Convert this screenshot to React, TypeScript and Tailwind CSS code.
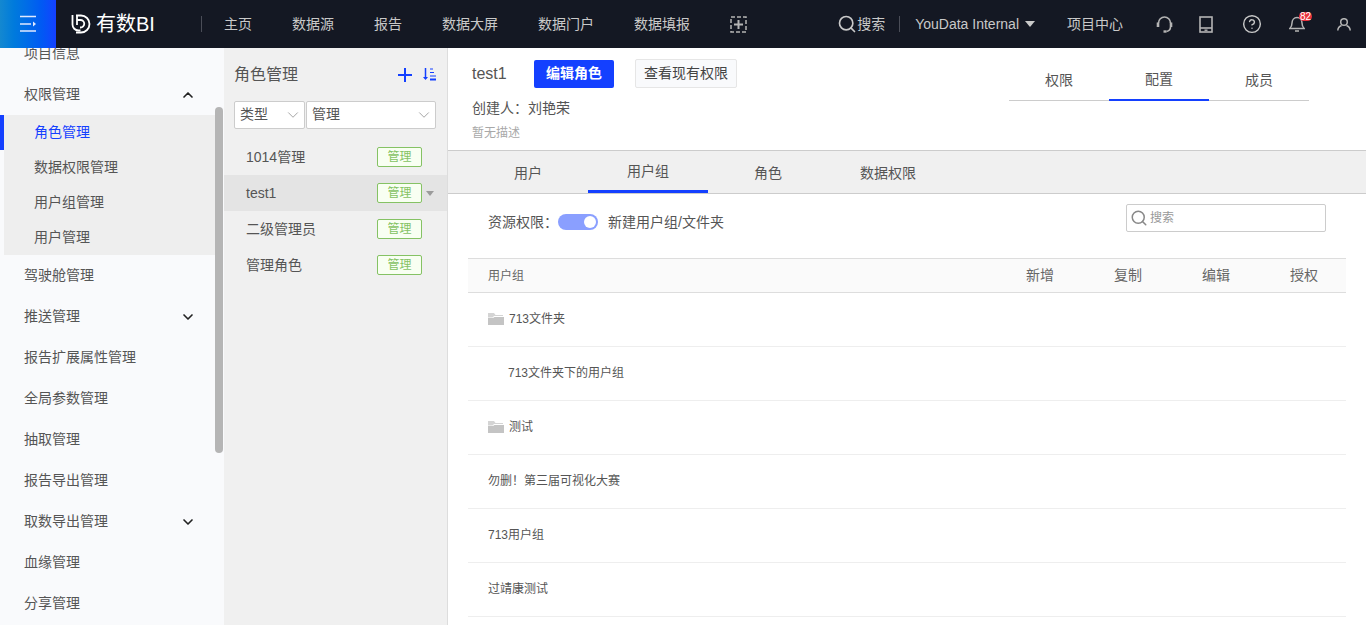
import { ChevronDown, ChevronUp, CircleHelp, Search } from "lucide-react";

const FONT = "font-['Liberation_Sans','Noto_Sans_CJK_SC',sans-serif]";

const NAV = ["主页", "数据源", "报告", "数据大屏", "数据门户", "数据填报"];
const SUB_MENU = ["角色管理", "数据权限管理", "用户组管理", "用户管理"];
const MENU_AFTER: [string, boolean][] = [
  ["驾驶舱管理", false],
  ["推送管理", true],
  ["报告扩展属性管理", false],
  ["全局参数管理", false],
  ["抽取管理", false],
  ["报告导出管理", false],
  ["取数导出管理", true],
  ["血缘管理", false],
  ["分享管理", false],
];
const ROLES = ["1014管理", "test1", "二级管理员", "管理角色"];
const ROWS: { name: string; folder?: boolean; indent?: boolean }[] = [
  { name: "713文件夹", folder: true },
  { name: "713文件夹下的用户组", indent: true },
  { name: "测试", folder: true },
  { name: "勿删！第三届可视化大赛" },
  { name: "713用户组" },
  { name: "过靖康测试" },
];

const FolderIcon = () => (
  <svg width="16" height="12" viewBox="0 0 16 12" className="mr-[5px]">
    <path d="M0 0h6l1.500 2H15v1H6L4.500 4.500H0z" fill="#d4d4d4" />
    <path d="M0 5h5l1.500-1H16v8H0z" fill="#c4c4c4" />
  </svg>
);

const Header = () => (
  <header className="flex h-12 shrink-0 items-center bg-[#141823] text-[14px] text-[#c9c9c9]">
    <div className="flex h-12 w-14 items-center justify-center bg-gradient-to-r from-[#1488d0] to-[#1440ff]">
      <svg width="16" height="18" viewBox="0 0 16 18" fill="none" stroke="#dfe9ff" strokeWidth="1.600">
        <path d="M0 1.500h16M0 9h11M0 16h16" />
        <path d="M13 6.500l3 2.500-3 2.500z" fill="#dfe9ff" stroke="none" />
      </svg>
    </div>
    <div className="ml-[15px] flex w-[130px] items-center">
      <svg width="20" height="20" viewBox="0 0 20 20" fill="none" stroke="#fff" strokeWidth="1.800">
        <path d="M1.500 1v9.500a6 6 0 0 0 6 6h2" />
        <path d="M5 1.500h5a8.500 8.500 0 0 1 0 17H5" />
        <path d="M6 1.500V11M6 6h3.500a3.700 3.700 0 0 1 0 7.500H9" />
      </svg>
      <span className="ml-[5px] text-[20px] leading-none text-white">有数BI</span>
    </div>
    <div className="h-[16px] w-px bg-[#4a4d57]" />
    <nav className="ml-[22px] flex items-center gap-10">
      {NAV.map((item) => (
        <span key={item} className="whitespace-nowrap">
          {item}
        </span>
      ))}
      <svg width="17" height="17" viewBox="0 0 17 17" fill="none" stroke="#b4b4b4">
        <rect x="1" y="1" width="15" height="15" strokeWidth="1.500" strokeDasharray="4 2" />
        <path d="M8.500 4v9M4 8.500h9" strokeWidth="2" />
      </svg>
    </nav>
    <div className="ml-auto flex items-center">
      <Search size={20} strokeWidth={2} />
      <span>搜索</span>
      <div className="ml-[14px] h-[16px] w-px bg-[#4a4d57]" />
      <span className="ml-[15px] whitespace-nowrap">YouData Internal</span>
      <span className="ml-[6px] h-0 w-0 border-x-[5px] border-t-[6px] border-x-transparent border-t-[#c9c9c9]" />
      <span className="ml-[32px]">项目中心</span>
      <svg width="17" height="18" viewBox="0 0 17 18" fill="none" stroke="#b4b4b4" strokeWidth="1.600" className="ml-[33px]">
        <path d="M2.500 8a6 6 0 0 1 12 0" />
        <path d="M2 7.500v4.500M15 7.500v4.500" strokeWidth="2.600" />
        <path d="M14.500 12c0 2.500-1.500 4-4 4.500" />
        <path d="M7.500 16.500h3" strokeWidth="2.400" />
      </svg>
      <svg width="14" height="17" viewBox="0 0 14 17" fill="none" stroke="#b4b4b4" strokeWidth="1.600" className="ml-[26px]">
        <rect x="1" y="1" width="12" height="15" />
        <path d="M1 12h12" />
        <path d="M5.500 14.200h3" strokeWidth="1.400" />
      </svg>
      <CircleHelp size={20} strokeWidth={1.700} className="ml-[29px]" />
      <div className="relative ml-[27px] h-[18px] w-[16px]">
        <svg width="16" height="17" viewBox="0 0 16 17" fill="none" stroke="#b4b4b4" strokeWidth="1.500">
          <path d="M.800 13.500h14.400c-1.700-1.500-2.200-3-2.200-5.500 0-3-2-5.500-5-5.500S3 5 3 8c0 2.500-.500 4-2.200 5.500zM6 16h4" />
        </svg>
        <span className="absolute left-[10px] top-[-3px] flex h-[9px] w-[13px] items-center justify-center rounded-full bg-[#e8323c] text-[10px] leading-none text-white">
          82
        </span>
      </div>
      <svg width="14" height="13" viewBox="0 0 14 13" fill="none" stroke="#b4b4b4" strokeWidth="1.500" className="ml-[32px] mr-[15px]">
        <circle cx="7" cy="4" r="3.300" />
        <path d="M.800 12.500c0-2.500 1.500-4 3.700-5M13.200 12.500c0-2.500-1.500-4-3.700-5" />
      </svg>
    </div>
  </header>
);

const Sidebar = () => (
  <aside className="relative w-[224px] shrink-0 overflow-hidden bg-[#f9fafc] text-[14px] text-[#555]">
    <div className="-mt-[15px]">
      <div className="flex h-[41px] items-center pl-6">项目信息</div>
      <div className="flex h-[41px] items-center justify-between pl-6 pr-[28px]">
        权限管理
        <ChevronUp size={16} strokeWidth={2.500} className="text-[#222]" />
      </div>
      <div className="ml-1 mr-[9px] bg-[#eeeeee]">
        {SUB_MENU.map((item, i) => (
          <div
            key={item}
            className={`flex h-[35px] items-center pl-[30px] ${i === 0 ? "text-[#1440ff]" : ""}`}
          >
            {item}
          </div>
        ))}
      </div>
      {MENU_AFTER.map(([item, hasArrow]) => (
        <div key={item} className="flex h-[41px] items-center justify-between pl-6 pr-[28px]">
          {item}
          {hasArrow && <ChevronDown size={16} strokeWidth={2.500} className="text-[#222]" />}
        </div>
      ))}
    </div>
    {/* selected marker and scrollbar */}
    <div className="absolute left-0 top-[67px] h-[35px] w-1 bg-[#1440ff]" />
    <div className="absolute left-[215px] top-[59px] h-[346px] w-2 rounded-full bg-[#b5b5b5]" />
  </aside>
);

const RoleList = () => (
  <section className="w-[224px] shrink-0 border-r border-[#dddddd] bg-[#f0f0f0] text-[14px] text-[#555]">
    <div className="flex h-[53px] items-center justify-between px-[10px]">
      <span className="text-[16px]">角色管理</span>
      <div className="mr-px flex items-center gap-[11px] text-[#1440ff]">
        <svg width="14" height="14" viewBox="0 0 14 14" fill="none" stroke="currentColor" strokeWidth="2">
          <path d="M7 0v14M0 7h14" />
        </svg>
        <svg width="13" height="13" viewBox="0 0 13 13" fill="none" stroke="currentColor">
          <path d="M2.500 0v11" strokeWidth="1.500" />
          <path d="M0 9l2.500 3L5 9z" fill="currentColor" stroke="none" />
          <path d="M7 1h3M7 4.500h4M7 8h6" strokeWidth="1.200" />
          <path d="M7 11.500h6" strokeWidth="2" />
        </svg>
      </div>
    </div>
    <div className="flex gap-px pl-[10px] pr-[11px]">
      <div className="flex h-[28px] w-[71px] items-center justify-between rounded-[2px] border border-[#cccccc] bg-white pb-[2px] pl-[5px] pr-[2px]">
        类型
        <ChevronDown size={18} strokeWidth={1} className="mt-[2px] text-[#888]" />
      </div>
      <div className="flex h-[28px] flex-1 items-center justify-between rounded-[2px] border border-[#cccccc] bg-white pb-[2px] pl-[5px] pr-[2px]">
        管理
        <ChevronDown size={18} strokeWidth={1} className="mt-[2px] text-[#888]" />
      </div>
    </div>
    <ul className="mt-[10px]">
      {ROLES.map((role) => {
        const active = role === "test1";
        return (
          <li
            key={role}
            className={`relative flex h-[36px] items-center pl-[22px] ${active ? "bg-[#e4e4e4]" : ""}`}
          >
            <span className="flex-1">{role}</span>
            <span className="mr-[25px] flex h-[20px] w-[45px] items-center justify-center rounded-[2px] border border-[#85c264] bg-[#f8fff2] text-[12px] text-[#85c264]">
              管理
            </span>
            {active && (
              <span className="absolute left-[202px] top-[16px] h-0 w-0 border-x-[4px] border-t-[5px] border-x-transparent border-t-[#9b9b9b]" />
            )}
          </li>
        );
      })}
    </ul>
  </section>
);

const RoleDetail = () => (
  <div className="flex h-[102px] shrink-0 justify-between pl-6 pr-[57px] text-[#555]">
    <div>
      <div className="mt-[11px] flex items-center">
        <span className="w-[62px] text-[16px]">test1</span>
        <button className="flex h-[28px] w-[80px] items-center justify-center rounded-[2px] bg-[#1440ff] text-[14px] font-bold text-white">
          编辑角色
        </button>
        <button className="ml-[21px] flex h-[29px] w-[102px] items-center justify-center rounded-[2px] border border-[#e6e6e6] bg-[#f9fafc] text-[14px] text-[#444]">
          查看现有权限
        </button>
      </div>
      <div className="mt-[10px] text-[14px] leading-[20px]">创建人：刘艳荣</div>
      <div className="mt-[6px] text-[12px] leading-[18px] text-[#a8a8a8]">暂无描述</div>
    </div>
    <div className="mt-[12px] flex h-[41px] w-[300px] border-b border-[#cccccc] text-[14px]">
      {["权限", "配置", "成员"].map((tab) => (
        <div
          key={tab}
          className={`flex h-[41px] w-[100px] items-center justify-center ${
            tab === "配置" ? "border-b-2 border-[#1440ff]" : ""
          }`}
        >
          {tab}
        </div>
      ))}
    </div>
  </div>
);

const PermissionTable = () => (
  <div className="px-5 text-[#555]">
    <div className="flex h-[64px] items-start pl-5 pr-5 pt-[10px] text-[14px]">
      <div className="mt-[4px] flex h-[28px] items-center">
        <span>资源权限：</span>
        <span className="flex h-4 w-10 items-center justify-end rounded-full bg-[#8a9fff] pr-[2px]">
          <span className="h-3 w-3 rounded-full bg-white" />
        </span>
        <span className="ml-[10px]">新建用户组/文件夹</span>
      </div>
      <div className="ml-auto flex h-[28px] w-[200px] items-center rounded-[2px] border border-[#cccccc] pb-[1px] pl-[3px] text-[12px] text-[#999]">
        <Search size={18} strokeWidth={2} className="mr-[2px] text-[#888]" />
        搜索
      </div>
    </div>
    <div className="flex h-[35px] items-center border-y border-[#dddddd] bg-[#fafafa] pl-5 text-[12px] text-[#666]">
      <span className="flex-1">用户组</span>
      <div className="flex text-[14px]">
        {["新增", "复制", "编辑", "授权"].map((col) => (
          <span key={col} className="w-[88px] pl-[32px]">
            {col}
          </span>
        ))}
      </div>
    </div>
    {ROWS.map((row) => (
      <div
        key={row.name}
        className={`flex h-[54px] items-center border-b border-[#eeeeee] pb-[2px] text-[12px] ${
          row.indent ? "pl-10" : "pl-5"
        }`}
      >
        {row.folder && <FolderIcon />}
        {row.name}
      </div>
    ))}
  </div>
);

export default function App() {
  return (
    <div className={`flex h-[625px] w-[1366px] flex-col overflow-hidden bg-white ${FONT}`}>
      <Header />
      <div className="flex min-h-0 flex-1">
        <Sidebar />
        <RoleList />
        <main className="flex min-w-0 flex-1 flex-col overflow-hidden">
          <RoleDetail />
          <div className="flex h-[44px] shrink-0 border-y border-[#cccccc] bg-[#f0f0f0] pl-5 text-[14px] text-[#555]">
            {["用户", "用户组", "角色", "数据权限"].map((tab) => (
              <div
                key={tab}
                className={`flex h-[42px] w-[120px] items-center justify-center pt-[2px] ${
                  tab === "用户组" ? "border-b-[3px] border-[#1440ff]" : ""
                }`}
              >
                {tab}
              </div>
            ))}
          </div>
          <PermissionTable />
        </main>
      </div>
    </div>
  );
}
